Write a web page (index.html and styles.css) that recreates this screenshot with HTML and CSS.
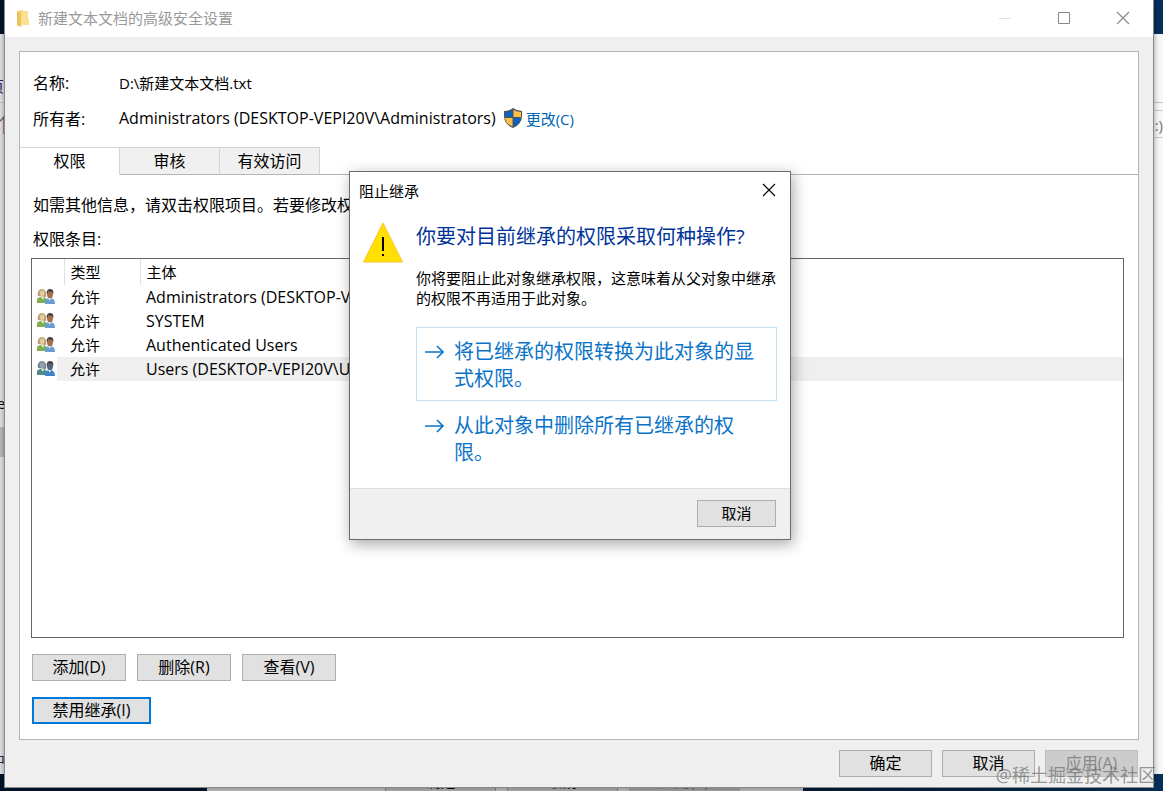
FILE: index.html
```
<!DOCTYPE html>
<html lang="zh-CN">

<head>
    <meta charset="UTF-8">
    <meta name="viewport" content="width=device-width, initial-scale=1.0">
    <title>新建文本文档的高级安全设置</title>
    <link rel="stylesheet" href="styles.css">
</head>

<body>
    <svg class="defs" width="0" height="0" aria-hidden="true">
        <symbol id="users" viewBox="0 0 18 16">
            <path class="hair" d="M1 7C0 3 2 0 5 0s5 3 4 8z" />
            <ellipse class="face" cx="5.2" cy="4.2" rx="2.3" ry="3" />
            <path class="shirt" d="M0 14V10q1-2 4-2h3q3 1 3 6z" />
            <path d="M4 8l2 3 1-3z" fill="#e2edcf" />
            <ellipse class="face-dark" cx="13" cy="5" rx="3" ry="4.2" />
            <path d="M9.5 4Q10 0 13 0q4 0 3.4 5l-1-2q-3 0-4-1l-1 3z" fill="#4d4141" />
            <path class="shirt-blue" d="M8 15q0-6 4-6h2q4 1 4 6z" />
            <path d="M11 9l2 3 1-3z" fill="#dbe9f7" />
        </symbol>
        <symbol id="arrow" viewBox="0 0 20 16">
            <path d="M0 8H18M12 2L18 8L12 14" fill="none" stroke="currentColor" stroke-width="1.6" />
        </symbol>
        <symbol id="cross" viewBox="0 0 14 14">
            <path d="M1 1L13 13M13 1L1 13" fill="none" stroke="currentColor" stroke-width="1.1" />
        </symbol>
    </svg>

    <div class="desktop">
        <!-- windows further back -->
        <div class="back-window">
            <span class="peek-line"></span>
            <span class="peek peek-page">页</span>
            <span class="peek peek-up">↑</span>
            <span class="peek peek-e">e</span>
            <span class="peek-scroll"></span>
            <span class="peek peek-end">中</span>
            <span class="peek-search">:)</span>
        </div>
        <div class="props-window">
            <button type="button">确定</button>
            <button type="button">取消</button>
            <button type="button" class="dim">应用(A)</button>
        </div>

        <div class="window">
            <div class="titlebar">
                <svg class="folder" width="14" height="18" viewBox="0 0 14 18">
                    <path d="M1 2L7 1V16L1 17z" fill="#f6d57c" />
                    <path d="M6 2H12V9L13 10V16H5z" fill="#fbe08f" />
                    <path d="M1 2L5 4V18L1 16z" fill="#eec25c" />
                </svg>
                <span class="title">新建文本文档的高级安全设置</span>
                <button type="button" class="caption-btn" aria-label="最小化" disabled>
                    <svg width="14" height="14"><path d="M1 7.5H13" stroke="#e0e0e0" /></svg>
                </button>
                <button type="button" class="caption-btn" aria-label="最大化">
                    <svg width="14" height="14"><path d="M1.5 1.5H12.5V12.5H1.5z" fill="none" stroke="#888" /></svg>
                </button>
                <button type="button" class="caption-btn" aria-label="关闭">
                    <svg width="14" height="14"><use href="#cross" /></svg>
                </button>
            </div>

            <div class="panel">
                <dl class="info">
                    <dt>名称:</dt>
                    <dd>D:\新建文本文档.txt</dd>
                    <dt>所有者:</dt>
                    <dd>
                        <span class="latin">Administrators (DESKTOP-VEPI20V\Administrators)</span>
                        <a class="change" href="#">
                            <svg width="20" height="20" viewBox="0 0 20 20">
                                <path d="M10 0Q6 3 1 3V8Q1 16 10 20Q19 16 19 8V3Q14 3 10 0z" fill="#555" />
                                <path d="M9.500 2Q6 4 2 4V9H9.500z" fill="#0c62bd" />
                                <path d="M10.500 2Q14 4 18 4V9H10.500z" fill="#fcc04a" />
                                <path d="M2 10H9.500V18.500Q3 16 2 10z" fill="#fcc04a" />
                                <path d="M18 10H10.500V18.500Q17 16 18 10z" fill="#0c62bd" />
                            </svg>更改(C)</a>
                    </dd>
                </dl>

                <div class="tabs" role="tablist">
                    <button type="button" role="tab" class="tab active" aria-selected="true">权限</button>
                    <button type="button" role="tab" class="tab">审核</button>
                    <button type="button" role="tab" class="tab">有效访问</button>
                </div>

                <div class="tab-body">
                    <div class="hint">如需其他信息，请双击权限项目。若要修改权</div>
                    <div class="hint">权限条目:</div>
                    <div class="list">
                        <table class="entries">
                            <thead>
                                <tr>
                                    <th class="col-icon"></th>
                                    <th class="col-type">类型</th>
                                    <th>主体</th>
                                </tr>
                            </thead>
                            <tbody>
                                <tr>
                                    <td><svg class="users" width="18" height="16"><use href="#users" /></svg></td>
                                    <td>允许</td>
                                    <td class="latin">Administrators (DESKTOP-VEPI20V\Administrators)</td>
                                </tr>
                                <tr>
                                    <td><svg class="users" width="18" height="16"><use href="#users" /></svg></td>
                                    <td>允许</td>
                                    <td class="latin">SYSTEM</td>
                                </tr>
                                <tr>
                                    <td><svg class="users" width="18" height="16"><use href="#users" /></svg></td>
                                    <td>允许</td>
                                    <td class="latin">Authenticated Users</td>
                                </tr>
                                <tr class="selected">
                                    <td><svg class="users" width="18" height="16"><use href="#users" /></svg></td>
                                    <td>允许</td>
                                    <td class="latin">Users (DESKTOP-VEPI20V\Users)</td>
                                </tr>
                            </tbody>
                        </table>
                    </div>
                    <div class="actions">
                        <button type="button" class="btn">添加(D)</button>
                        <button type="button" class="btn">删除(R)</button>
                        <button type="button" class="btn">查看(V)</button>
                    </div>
                    <div class="actions">
                        <button type="button" class="btn btn-default">禁用继承(I)</button>
                    </div>
                </div>
            </div>

            <div class="footer">
                <button type="button" class="btn">确定</button>
                <button type="button" class="btn">取消</button>
                <button type="button" class="btn" disabled>应用(A)</button>
            </div>
        </div>

        <div class="dialog" role="dialog" aria-labelledby="dialog-title">
            <div class="dialog-title">
                <span id="dialog-title">阻止继承</span>
                <button type="button" class="dialog-close" aria-label="关闭">
                    <svg width="14" height="14"><use href="#cross" /></svg>
                </button>
            </div>
            <div class="dialog-main">
                <svg class="warning" width="40" height="42" viewBox="0 0 40 42">
                    <path d="M20 2L39.500 41H.5z" fill="#ffe000" stroke="#fbc02d" />
                    <path d="M19 16H21V30H19zM19 33H21V35H19z" fill="#000" />
                </svg>
                <div class="dialog-text">
                    <h1>你要对目前继承的权限采取何种操作?</h1>
                    <p>你将要阻止此对象继承权限，这意味着从父对象中继承的权限不再适用于此对象。</p>
                    <button type="button" class="command focused">
                        <svg width="20" height="16"><use href="#arrow" /></svg>
                        <span>将已继承的权限转换为此对象的显式权限。</span>
                    </button>
                    <button type="button" class="command">
                        <svg width="20" height="16"><use href="#arrow" /></svg>
                        <span>从此对象中删除所有已继承的权限。</span>
                    </button>
                </div>
            </div>
            <div class="dialog-footer">
                <button type="button" class="btn">取消</button>
            </div>
        </div>

        <div class="watermark">@稀土掘金技术社区</div>
    </div>
</body>

</html>
```
FILE: styles.css
```
* {
    box-sizing: border-box;
}

body {
    margin: 0;
    color: #000;
    font-family: "Open Sans", "Noto Sans CJK SC", sans-serif;
    font-size: 15px;
}

button {
    font: inherit;
    color: inherit;
    padding: 0;
}

.defs {
    position: absolute;
}

.desktop {
    position: relative;
    height: 100vh;
    padding: 0 9px 3px 4px;
    overflow: hidden;
    background: linear-gradient(90deg, #02142b 60%, #04305d);
}

/* windows behind */
.back-window {
    position: absolute;
    top: 34px;
    right: 0;
    bottom: 17px;
    left: 0;
    background: linear-gradient(90deg, #e4e5e7, #f8f8f8);
}

.peek,
.peek-line,
.peek-search,
.peek-scroll {
    position: absolute;
    left: -10px;
    line-height: 20px;
}

.peek-line {
    top: 68px;
    left: 0;
    width: 100%;
    height: 1px;
    background: #c8c8c8;
}

.peek-page {
    top: 42px;
    left: -11px;
    color: #2b2365;
}

.peek-up {
    top: 82px;
    left: -6px;
    font-size: 20px;
    color: #666;
}

.peek-e {
    top: 359px;
    left: -3px;
}

.peek-scroll {
    top: 393px;
    left: 0;
    width: 5px;
    height: 30px;
    background: #bcbcbc;
}

.peek-end {
    top: 716px;
    color: #234;
}

.peek-search {
    top: 76px;
    left: auto;
    right: 0;
    height: 28px;
    line-height: 28px;
    border: solid #ccc;
    border-width: 1px 0;
    color: #777;
}

.props-window {
    position: absolute;
    bottom: 0;
    left: 207px;
    width: 596px;
    height: 20px;
    padding-left: 178px;
    display: flex;
    gap: 11px;
    background: #c2c2c2;
}

.props-window button {
    width: 111px;
    line-height: 20px;
    background: #b2b2b2;
    border: solid #888;
    border-width: 0 1px;
}

.props-window .dim {
    background: #a5a5a5;
    border-color: #a0a0a0;
    color: #666;
}

/* security settings window */
.window {
    position: relative;
    height: 100%;
    display: flex;
    flex-direction: column;
    background: #efefef;
    border: solid #8b8b8b;
    border-width: 0 1px 1px;
    box-shadow: 0 0 6px rgba(0, 0, 0, 0.4);
}

.titlebar {
    height: 37px;
    padding: 0 1px 2px 11px;
    display: flex;
    align-items: center;
    background: #fff;
    color: #999;
}

.title {
    flex: 1;
    margin-left: 8px;
}

.caption-btn {
    width: 59px;
    height: 35px;
    display: flex;
    align-items: center;
    justify-content: center;
    border: none;
    background: none;
    color: #888;
}

.panel {
    flex: 1;
    margin: 14px 14px 0;
    padding-top: 12px;
    display: flex;
    flex-direction: column;
    background: #fff;
    border: 1px solid #b5b5b5;
}

.info {
    margin: 0 0 11px;
    padding-left: 13px;
    display: grid;
    grid-template-columns: 86px 1fr;
    grid-auto-rows: 36px;
    align-items: center;
}

.info dt {
    font-size: 16px;
}

.info dd {
    margin: 0;
    display: flex;
    align-items: center;
    gap: 7px;
}

.latin {
    font-size: 16px;
}

.change {
    display: flex;
    align-items: center;
    gap: 3px;
    color: #0066b4;
    text-decoration: none;
}

.tabs {
    display: flex;
    height: 28px;
    border-bottom: 1px solid #b5b5b5;
}

.tab {
    width: 100px;
    height: 28px;
    font-size: 16px;
    line-height: 24px;
    background: #f0f0f0;
    border: 1px solid #d5d5d5;
    border-left: none;
    border-bottom-color: #b5b5b5;
}

.tab.active {
    background: #fff;
    border-bottom-color: #fff;
}

.tab-body {
    flex: 1;
    padding: 13px 14px 15px 11px;
    display: flex;
    flex-direction: column;
}

.hint {
    height: 34px;
    padding-left: 2px;
    font-size: 16px;
    line-height: 34px;
}

.list {
    flex: 1;
    margin-top: 2px;
    border: 1px solid #666;
}

.entries {
    width: 100%;
    table-layout: fixed;
    border-collapse: collapse;
    line-height: 24px;
}

.entries th {
    height: 26px;
    padding: 0 6px;
    font-weight: normal;
    text-align: left;
    border-right: 1px solid #e2e2e2;
}

.entries th:last-child {
    border-right: none;
}

.entries .col-icon {
    width: 32px;
}

.entries .col-type {
    width: 76px;
}

.entries td {
    height: 24px;
    padding: 0 6px;
    white-space: nowrap;
}

.entries td:first-child {
    padding: 0 0 0 5px;
}

.users {
    display: block;
}

.hair {
    fill: var(--hair, #b4a268);
}

.face {
    fill: var(--face, #e6c6a4);
}

.face-dark {
    fill: var(--face-dark, #a66f4e);
}

.shirt {
    fill: var(--shirt, #7fae52);
}

.shirt-blue {
    fill: var(--shirt-blue, #6c9bd1);
}

.selected .users {
    --hair: #70858c;
    --face: #8fa5b5;
    --face-dark: #55647a;
    --shirt: #4c8c86;
    --shirt-blue: #3f83c6;
}

.selected td {
    background: #efefef;
}

.selected td:first-child {
    background: linear-gradient(90deg, #fff 25px, #efefef 25px);
}

.actions {
    margin-top: 16px;
    padding-left: 1px;
    display: flex;
    gap: 11px;
}

.btn {
    width: 94px;
    height: 27px;
    padding-bottom: 2px;
    font-size: 16px;
    line-height: 22px;
    background: #e1e1e1;
    border: 1px solid #adadad;
}

.btn:disabled {
    background: #ccc;
    border-color: #bfbfbf;
    color: #888;
}

.btn-default {
    width: 119px;
    border: 2px solid #0078d7;
}

.footer {
    padding: 10px 15px;
    display: flex;
    justify-content: flex-end;
    gap: 10px;
}

.footer .btn {
    width: 93px;
}

/* block inheritance dialog */
.dialog {
    position: absolute;
    top: 171px;
    left: 349px;
    width: 442px;
    background: #fff;
    border: 1px solid #6b6b6b;
    box-shadow: 2px 4px 14px rgba(0, 0, 0, 0.35);
}

.dialog-title {
    height: 36px;
    padding: 0 14px 0 9px;
    display: flex;
    align-items: center;
    justify-content: space-between;
}

.dialog-close {
    display: flex;
    border: none;
    background: none;
}

.dialog-main {
    padding: 13px;
    display: flex;
    gap: 13px;
}

.warning {
    flex: none;
}

.dialog-text {
    flex: 1;
}

.dialog-text h1 {
    margin: 0 0 17px;
    padding-top: 2px;
    font-size: 20px;
    font-weight: normal;
    line-height: 28px;
    color: #003399;
}

.dialog-text p {
    margin: 0 0 19px;
    line-height: 20px;
}

.command {
    width: 100%;
    height: 74px;
    padding: 10px 10px 8px 8px;
    display: flex;
    gap: 9px;
    border: 1px solid transparent;
    background: none;
    font-size: 20px;
    line-height: 27px;
    text-align: left;
    color: #0b74c9;
}

.command svg {
    flex: none;
    margin-top: 6px;
}

.command.focused {
    border-color: #c2dff3;
}

.dialog-footer {
    padding: 11px 14px 12px;
    display: flex;
    justify-content: flex-end;
    background: #f0f0f0;
    border-top: 1px solid #dfdfdf;
}

.dialog-footer .btn {
    width: 79px;
    font-size: 15px;
}

.watermark {
    position: absolute;
    right: 7px;
    bottom: 4px;
    font-size: 18px;
    line-height: 24px;
    color: rgba(110, 110, 110, 0.7);
}
```
